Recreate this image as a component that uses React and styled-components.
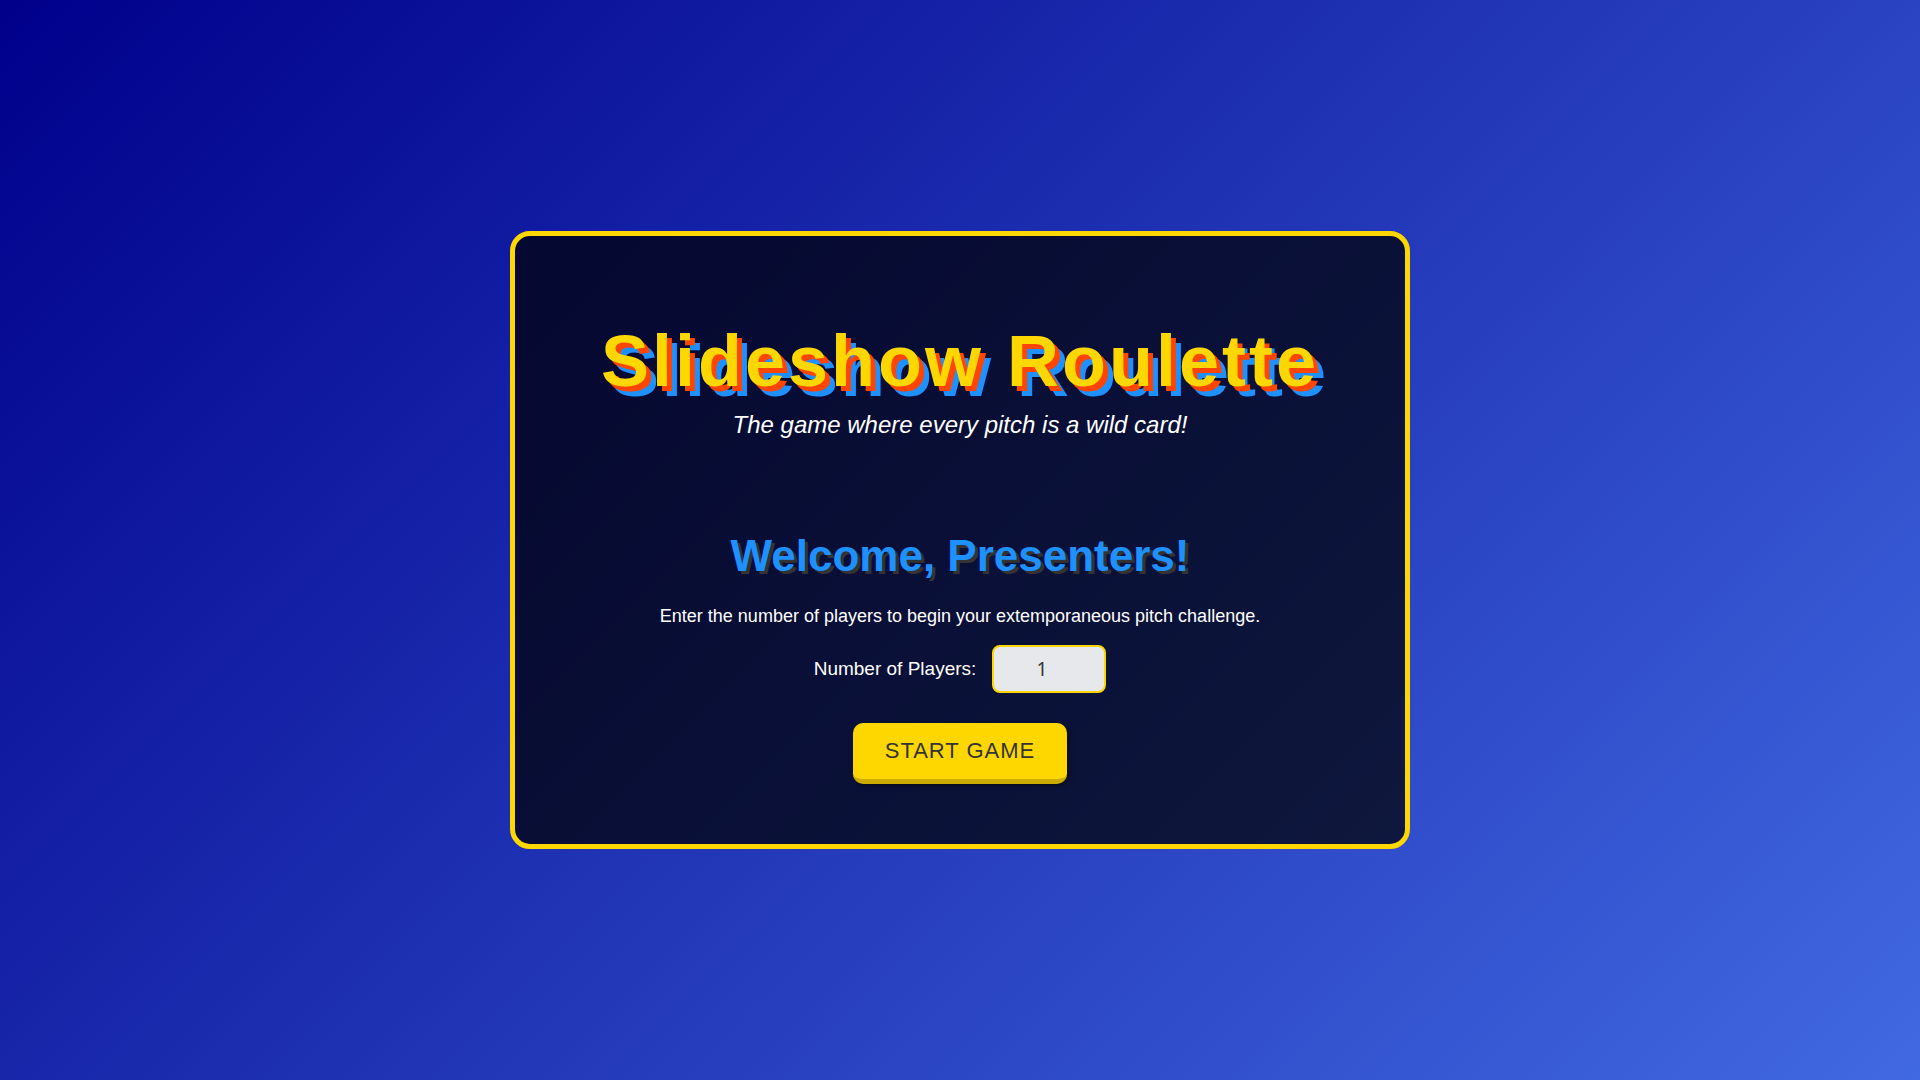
import React, { useState } from 'react';
import styled, { createGlobalStyle } from 'styled-components';

const GlobalStyle = createGlobalStyle`
  * {
    box-sizing: border-box;
  }

  body {
    margin: 0;
    min-height: 100vh;
    font-family: 'Liberation Sans', Arial, sans-serif;
    color: #fff;
    background: linear-gradient(135deg, #00008b, #4169e1);
  }
`;

const Page = styled.div`
  display: flex;
  align-items: center;
  justify-content: center;
  min-height: 100vh;
`;

const Card = styled.main`
  width: 100%;
  max-width: 900px;
  padding: 48px;
  border: 5px solid #ffd700;
  border-radius: 20px;
  background: rgba(0, 0, 0, 0.7);
  text-align: center;
`;

const Header = styled.header`
  padding: 32px 0;
`;

const Title = styled.h1`
  margin: 0;
  font-size: 72px;
  line-height: 90px;
  letter-spacing: 3px;
  color: #ffd700;
  text-shadow: 5px 5px 0 #ff4500, 10px 10px 0 #1e90ff;
`;

const Tagline = styled.p`
  margin: 0;
  font-size: 24px;
  line-height: 38px;
  font-style: italic;
`;

const Setup = styled.form`
  display: flex;
  flex-direction: column;
  align-items: center;
  padding: 52px 0 12px;
`;

const Welcome = styled.h2`
  margin: 0 0 18px;
  font-size: 44px;
  line-height: 56px;
  color: #1e90ff;
  text-shadow: 3px 3px 0 #333;
`;

const Hint = styled.p`
  margin: 0 0 14px;
  font-size: 18px;
  line-height: 29px;
`;

const Field = styled.div`
  display: flex;
  align-items: center;
  gap: 16px;
  margin-bottom: 30px;
`;

const Label = styled.label`
  font-size: 19px;
`;

const PlayerInput = styled.input`
  width: 114px;
  height: 48px;
  padding: 8px;
  border: 2px solid #ffd700;
  border-radius: 8px;
  background: #e6e8ec;
  color: #333;
  font-family: 'Noto Sans', sans-serif;
  font-size: 19px;
  text-align: center;
`;

const StartButton = styled.button`
  padding: 12px 30px;
  border: none;
  border-bottom: 5px solid #ccac00;
  border-radius: 10px;
  background: #ffd700;
  box-shadow: 2px 2px 4px rgba(0, 0, 0, 0.5);
  color: #333;
  font-family: inherit;
  font-size: 22px;
  line-height: 32px;
  letter-spacing: 1px;
  text-transform: uppercase;
  min-width: 214px;
  cursor: pointer;
`;

const App = () => {
  const [players, setPlayers] = useState(1);

  return (
    <Page>
      <GlobalStyle />
      <Card>
        <Header>
          <Title>Slideshow Roulette</Title>
          <Tagline>The game where every pitch is a wild card!</Tagline>
        </Header>
        <Setup onSubmit={e => e.preventDefault()}>
          <Welcome>Welcome, Presenters!</Welcome>
          <Hint>Enter the number of players to begin your extemporaneous pitch challenge.</Hint>
          <Field>
            <Label htmlFor="players">Number of Players:</Label>
            <PlayerInput
              id="players"
              type="number"
              min="1"
              value={players}
              onChange={e => setPlayers(e.target.value)}
            />
          </Field>
          <StartButton type="submit">Start Game</StartButton>
        </Setup>
      </Card>
    </Page>
  );
};

export default App;
